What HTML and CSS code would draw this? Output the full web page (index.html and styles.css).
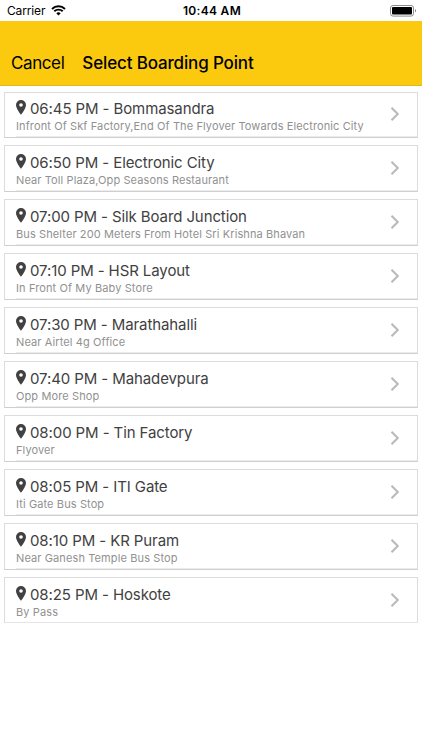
FILE: index.html
```html
<!DOCTYPE html>
<html lang="en">
	<head>
		<title>Select Boarding Point</title><meta charset="utf-8">
		<meta name="viewport" content="width=device-width, initial-scale=1">
		<link rel="stylesheet" href="styles.css">
	</head>
	<body>
		<svg class="defs">
			<symbol id="pin" viewBox="0 0 10 15"><path fill-rule="evenodd" d="M5 0A5 5 0 0 0 0 5C0 8.8 5 14.7 5 14.7S10 8.8 10 5A5 5 0 0 0 5 0ZM5 3.2A1.8 1.8 0 1 1 5 6.8A1.8 1.8 0 1 1 5 3.2Z"/></symbol>
			<symbol id="arrow" viewBox="0 0 10 16"><path d="M1.5 1.7L7.8 8L1.5 14.3"/></symbol>
		</svg>

		<div class="status">
			<div class="carrier">
				<span>Carrier</span>
				<svg class="wifi" viewBox="0 0 15 11"><path d="M7.5 10.6L5.3 8.2A3.2 3.2 0 0 1 9.7 8.2Z"/><path class="wave" d="M3.3 6.3A6 6 0 0 1 11.7 6.3M1 4A9.2 9.2 0 0 1 14 4"/></svg>
			</div>
			<span class="clock">10:44 AM</span>
			<svg class="battery" viewBox="0 0 27 12"><rect class="shell" x=".5" y=".5" width="23" height="10.6" rx="2.5"/><rect x="2" y="2" width="20" height="7.6" rx="1"/><path class="cap" d="M25 4A2 2 0 0 1 25 7.6Z"/></svg>
		</div>

		<header class="navbar">
			<span class="cancel">Cancel</span>
			<h1>Select Boarding Point</h1>
		</header>

		<ul class="points">
			<li class="point">
				<div class="info">
					<h2><svg class="pin"><use href="#pin"/></svg><span>06:45 PM - Bommasandra</span></h2>
					<p>Infront Of Skf Factory,End Of The Flyover Towards Electronic City</p>
				</div>
				<svg class="arrow"><use href="#arrow"/></svg>
			</li>
			<li class="point">
				<div class="info">
					<h2><svg class="pin"><use href="#pin"/></svg><span>06:50 PM - Electronic City</span></h2>
					<p>Near Toll Plaza,Opp Seasons Restaurant</p>
				</div>
				<svg class="arrow"><use href="#arrow"/></svg>
			</li>
			<li class="point">
				<div class="info">
					<h2><svg class="pin"><use href="#pin"/></svg><span>07:00 PM - Silk Board Junction</span></h2>
					<p>Bus Shelter 200 Meters From Hotel Sri Krishna Bhavan</p>
				</div>
				<svg class="arrow"><use href="#arrow"/></svg>
			</li>
			<li class="point">
				<div class="info">
					<h2><svg class="pin"><use href="#pin"/></svg><span>07:10 PM - HSR Layout</span></h2>
					<p>In Front Of My Baby Store</p>
				</div>
				<svg class="arrow"><use href="#arrow"/></svg>
			</li>
			<li class="point">
				<div class="info">
					<h2><svg class="pin"><use href="#pin"/></svg><span>07:30 PM - Marathahalli</span></h2>
					<p>Near Airtel 4g Office</p>
				</div>
				<svg class="arrow"><use href="#arrow"/></svg>
			</li>
			<li class="point">
				<div class="info">
					<h2><svg class="pin"><use href="#pin"/></svg><span>07:40 PM - Mahadevpura</span></h2>
					<p>Opp More Shop</p>
				</div>
				<svg class="arrow"><use href="#arrow"/></svg>
			</li>
			<li class="point">
				<div class="info">
					<h2><svg class="pin"><use href="#pin"/></svg><span>08:00 PM - Tin Factory</span></h2>
					<p>Flyover</p>
				</div>
				<svg class="arrow"><use href="#arrow"/></svg>
			</li>
			<li class="point">
				<div class="info">
					<h2><svg class="pin"><use href="#pin"/></svg><span>08:05 PM - ITI Gate</span></h2>
					<p>Iti Gate Bus Stop</p>
				</div>
				<svg class="arrow"><use href="#arrow"/></svg>
			</li>
			<li class="point">
				<div class="info">
					<h2><svg class="pin"><use href="#pin"/></svg><span>08:10 PM - KR Puram</span></h2>
					<p>Near Ganesh Temple Bus Stop</p>
				</div>
				<svg class="arrow"><use href="#arrow"/></svg>
			</li>
			<li class="point">
				<div class="info">
					<h2><svg class="pin"><use href="#pin"/></svg><span>08:25 PM - Hoskote</span></h2>
					<p>By Pass</p>
				</div>
				<svg class="arrow"><use href="#arrow"/></svg>
			</li>
		</ul>
	</body>
</html>
```
FILE: styles.css
```css
* { box-sizing: border-box; margin: 0; padding: 0; }
body { background: white; color: black; font-family: Inter, "Liberation Sans", sans-serif; }
.defs { display: none; }

.status {
	display: grid;
	grid-template-columns: 1fr auto 1fr;
	align-items: center;
	height: 21px;
	padding: 0 5px 0 7px;
	font-size: 12px;
}
.carrier { display: flex; align-items: center; gap: 6px; letter-spacing: -0.15px; }
.wifi { width: 15px; height: 11px; }
.wave { fill: none; stroke: black; stroke-width: 1.9; }
.clock { font-weight: 600; letter-spacing: 0.3px; }
.battery { width: 27px; height: 12px; justify-self: end; }
.shell { fill: none; stroke: #8c8c8c; }
.cap { fill: #8c8c8c; }

.navbar {
	display: flex;
	align-items: center;
	gap: 18px;
	height: 65px;
	padding: 20px 11px 0;
	background: #fbca0e;
	border-bottom: 1px solid #dfb925;
	font-size: 17px;
}
.cancel { letter-spacing: -0.4px; }
.navbar h1 { font-size: 17px; font-weight: 550; letter-spacing: -0.15px; }

.points { display: flex; flex-direction: column; gap: 7px; padding: 6px 4px; list-style: none; }
.point {
	display: flex;
	justify-content: space-between;
	height: 47px;
	padding: 7px 17px 0 11px;
	border: 1px solid #dcdcdc;
	border-bottom-color: #cfcfcf;
	/* row separator, starts at the text */
	background: linear-gradient(#ececec, #ececec) 11px 100% / 100% 1px no-repeat;
}
.point:first-child { height: 46px; padding-top: 6px; }
.point:last-child { height: 46px; border-bottom-color: #e4e4e4; background: none; }
.point h2 {
	display: flex;
	gap: 4px;
	color: #414141;
	font-size: 15px;
	font-weight: 400;
	line-height: 20px;
	letter-spacing: -0.1px;
	white-space: nowrap;
}
.point p { color: #919191; font-size: 11px; line-height: 15px; letter-spacing: 0.11px; white-space: nowrap; }
.pin { width: 10px; height: 15px; margin-top: 1px; fill: #414141; }
.arrow { width: 10px; height: 16px; margin-top: 7px; fill: none; stroke: #b9b9bb; stroke-width: 2; }
```
